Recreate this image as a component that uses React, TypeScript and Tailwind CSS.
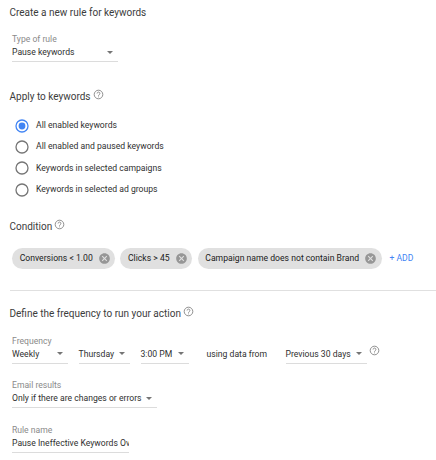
import React from "react";

const HelpIcon = ({ className = "" }: { className?: string }) => (
  <svg
    viewBox="0 0 11 11"
    className={`w-[11px] h-[11px] shrink-0 fill-none stroke-[#757575] ${className}`}
  >
    <circle cx="5.5" cy="5.5" r="4.3" strokeWidth="0.8" />
    <path d="M4.1 4.5a1.4 1.4 0 1 1 2.3 1.05C5.85 6 5.5 6.2 5.5 6.8M5.5 7.5v.8" strokeWidth="0.8" />
  </svg>
);

const RemoveIcon = () => (
  <svg viewBox="1.7 1.7 20.6 20.6" className="w-[11px] h-[11px] shrink-0 fill-[#969696]">
    <path d="M12 2C6.47 2 2 6.47 2 12s4.47 10 10 10 10-4.47 10-10S17.53 2 12 2zm5 13.59L15.59 17 12 13.41 8.41 17 7 15.59 10.59 12 7 8.41 8.41 7 12 10.59 15.59 7 17 8.41 13.41 12 17 15.59z" />
  </svg>
);

const Heading = ({ children, help }: { children: string; help?: boolean }) => (
  <h2 className="flex h-4 items-center text-[10px] leading-4 text-[#3c3c3c] whitespace-nowrap">
    {children}
    {help && <HelpIcon className="ml-[2px] -mt-[5px]" />}
  </h2>
);

const Label = ({ children }: { children: string }) => (
  <div className="h-3 text-[8.6px] leading-3 text-[#8a8a8a]">{children}</div>
);

const Select = ({ value, className }: { value: string; className: string }) => (
  <div
    className={`flex h-[17px] shrink-0 justify-between border-b border-[#dcdcdc] leading-[14px] whitespace-nowrap ${className}`}
  >
    {value}
    <svg viewBox="0 0 6 3" className="mt-[5.5px] mr-[5px] w-[6px] h-[3px] shrink-0 fill-[#757575]">
      <path d="M0 0h6L3 3z" />
    </svg>
  </div>
);

const options = [
  "All enabled keywords",
  "All enabled and paused keywords",
  "Keywords in selected campaigns",
  "Keywords in selected ad groups",
];

const conditions = [
  { text: "Conversions < 1.00", width: "w-[103px]" },
  { text: "Clicks > 45", width: "w-[72px]" },
  { text: "Campaign name does not contain Brand", width: "w-[184px]" },
];

const App = () => {
  return (
    <div className="h-[460px] w-[436px] overflow-hidden bg-white pt-[5px] pl-[9.5px] font-['Roboto',sans-serif] text-[8.65px] text-[#303030]">
      <Heading>Create a new rule for keywords</Heading>

      {/* Type of rule */}
      <div className="mt-3 ml-[2.5px]">
        <Label>Type of rule</Label>
        <Select value="Pause keywords" className="w-[106px]" />
      </div>

      {/* Target keywords */}
      <div className="mt-[27px]">
        <Heading help>Apply to keywords</Heading>
        <div className="mt-[10px] ml-[5.5px] flex flex-col">
          {options.map((option, index) => (
            <div key={option} className="flex h-[21.3px] items-center gap-[7px]">
              <svg viewBox="0 0 14 14" className="w-[14px] h-[14px]">
                <circle
                  cx="7"
                  cy="7"
                  r="6"
                  strokeWidth="1.3"
                  className={index === 0 ? "fill-none stroke-[#4285f4]" : "fill-none stroke-[#757575]"}
                />
                {index === 0 && <circle cx="7" cy="7" r="3.4" className="fill-[#4285f4]" />}
              </svg>
              <span>{option}</span>
            </div>
          ))}
        </div>
      </div>

      {/* Conditions */}
      <div className="mt-[18.5px]">
        <Heading help>Condition</Heading>
        <div className="mt-[13.5px] ml-[2.5px] flex h-[21px] items-center gap-[5.3px] whitespace-nowrap">
          {conditions.map((condition) => (
            <div
              key={condition.text}
              className={`flex h-[21px] shrink-0 items-center justify-between rounded-full bg-[#e0e0e0] pr-[5.5px] pl-[7.7px] text-[#212121] ${condition.width}`}
            >
              {condition.text}
              <RemoveIcon />
            </div>
          ))}
          <span className="ml-[2.5px] text-[#4285f4]">+ ADD</span>
        </div>
      </div>

      <div className="mt-[20.5px] border-t border-[#e0e0e0]" />

      {/* Schedule */}
      <div className="mt-[15.5px]">
        <Heading help>Define the frequency to run your action</Heading>
        <div className="mt-[12.5px] ml-[2.5px]">
          <Label>Frequency</Label>
          <div className="flex">
            <Select value="Weekly" className="w-[56px]" />
            <Select value="Thursday" className="ml-[10.5px] w-[51px]" />
            <Select value="3:00 PM" className="ml-[11px] w-[48px]" />
            <span className="ml-[18px] w-[79px] leading-[14px]">using data from</span>
            <Select value="Previous 30 days" className="w-[81px]" />
            <HelpIcon className="ml-[2px] -mt-[2px]" />
          </div>
        </div>
      </div>

      {/* Email results */}
      <div className="mt-[15.5px] ml-[2.5px]">
        <Label>Email results</Label>
        <Select value="Only if there are changes or errors" className="w-[145px]" />
      </div>

      {/* Rule name */}
      <div className="mt-[15.5px] ml-[2.5px]">
        <Label>Rule name</Label>
        <div className="h-[17px] w-[117px] overflow-hidden border-b border-[#dcdcdc] leading-[14px] whitespace-nowrap">
          Pause Ineffective Keywords Ov
        </div>
      </div>
    </div>
  );
};

export default App;
